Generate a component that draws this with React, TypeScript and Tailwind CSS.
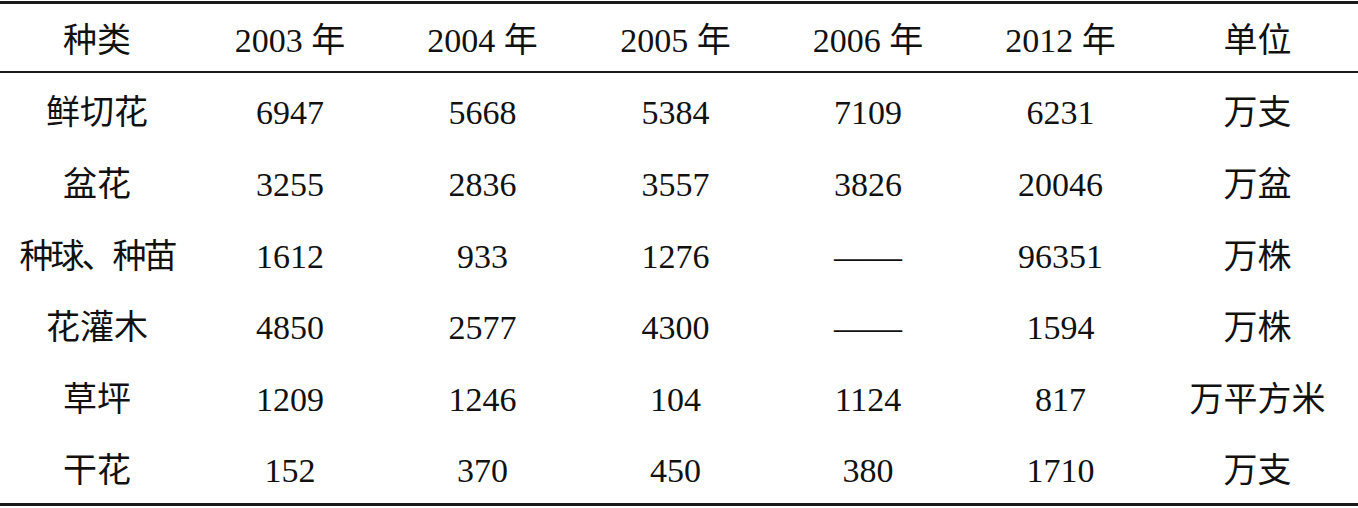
import React from "react";

const header = ["种类", "2003 年", "2004 年", "2005 年", "2006 年", "2012 年", "单位"];
const rows: string[][] = [
  ["鲜切花", "6947", "5668", "5384", "7109", "6231", "万支"],
  ["盆花", "3255", "2836", "3557", "3826", "20046", "万盆"],
  ["种球、种苗", "1612", "933", "1276", "——", "96351", "万株"],
  ["花灌木", "4850", "2577", "4300", "——", "1594", "万株"],
  ["草坪", "1209", "1246", "104", "1124", "817", "万平方米"],
  ["干花", "152", "370", "450", "380", "1710", "万支"],
];
const heights = ["h-[72px]", "h-[72px]", "h-[72px]", "h-[71px]", "h-[72px]", "h-[71px]"];

const grid = "grid grid-cols-[194px_192px_193px_193px_192px_193px_1fr]";

export default function App() {
  return (
    <div
      className="w-[1358px] h-[508px] bg-white text-[#111] text-[34px] leading-none overflow-hidden"
      style={{ fontFamily: '"Liberation Serif", "Noto Sans CJK SC", serif' }}
    >
      <div className="border-t-[3px] border-b-[3px] border-[#1a1a1a] mt-[1px]">
        <div className={`${grid} h-[69px] items-center border-b-[2px] border-[#1a1a1a]`}>
          {header.map((h, i) => (
            <div key={i} className="text-center whitespace-nowrap pt-[6px]">
              {h}
            </div>
          ))}
        </div>
        {rows.map((r, ri) => (
          <div key={ri} className={`${grid} ${heights[ri]} items-center`}>
            {r.map((c, ci) => (
              <div
                key={ci}
                className={`text-center whitespace-nowrap pt-[7px] ${
                  c === "种球、种苗" ? "tracking-[-3px]" : ""
                }`}
              >
                {c}
              </div>
            ))}
          </div>
        ))}
      </div>
    </div>
  );
}
